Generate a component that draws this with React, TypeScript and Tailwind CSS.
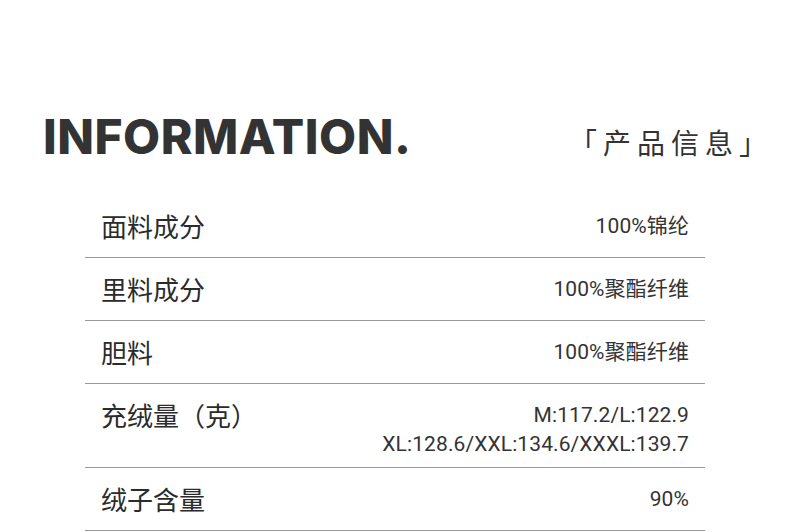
import React from "react";

const rows: { label: string; values: string[]; h: string }[] = [
  { label: "面料成分", values: ["100%锦纶"], h: "h-[63px]" },
  { label: "里料成分", values: ["100%聚酯纤维"], h: "h-[63px]" },
  { label: "胆料", values: ["100%聚酯纤维"], h: "h-[63px]" },
  { label: "充绒量（克）", values: ["M:117.2/L:122.9", "XL:128.6/XXL:134.6/XXXL:139.7"], h: "h-[84px]" },
  { label: "绒子含量", values: ["90%"], h: "h-[63px]" },
];

export default function App() {
  return (
    <div className="w-[790px] h-[532px] bg-white overflow-hidden text-[#333]">
      <div className="flex items-baseline justify-between pl-[43px] pr-[17px] pt-[107px] h-[195px]">
        <h1
          className="text-[48px] leading-[60px] font-extrabold tracking-[0.5px]"
          style={{ fontFamily: "Inter, 'Liberation Sans', sans-serif" }}
        >
          INFORMATION.
        </h1>
        <div
          className="text-[28px] leading-[40px] tracking-[6px]"
          style={{ fontFamily: "'Noto Sans CJK SC', sans-serif" }}
        >
          「产品信息」
        </div>
      </div>
      <div className="ml-[85px] w-[620px]">
        {rows.map((r) => (
          <div
            key={r.label}
            className={`flex justify-between items-start border-b border-[#9a9a9a] pt-[17px] px-[16px] ${r.h}`}
          >
            <div
              className="text-[26px] leading-[28px] font-normal text-[#2b2b2b]"
              style={{ fontFamily: "'Noto Sans CJK SC', sans-serif" }}
            >
              {r.label}
            </div>
            <div
              className="text-right text-[21px] leading-[28px] tracking-[0.1px]"
              style={{ fontFamily: "Roboto, 'Noto Sans CJK SC', sans-serif" }}
            >
              {r.values.map((v) => (
                <div key={v} className={r.values.length > 1 ? "leading-[29px]" : ""}>
                  {v}
                </div>
              ))}
            </div>
          </div>
        ))}
      </div>
    </div>
  );
}
